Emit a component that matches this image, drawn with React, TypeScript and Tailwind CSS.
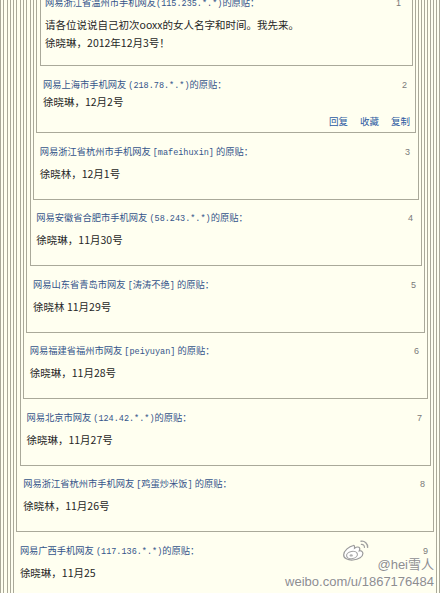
import type { ReactNode } from "react";

interface FloorData {
  author: string;
  lines: string[];
}

const floors: FloorData[] = [
  {
    author: "网易浙江省温州市手机网友(115.235.*.*)的原贴：",
    lines: ["请各位说说自己初次ooxx的女人名字和时间。我先来。", "徐晓琳，2012年12月3号！"],
  },
  { author: "网易上海市手机网友 (218.78.*.*)的原贴：", lines: ["徐晓琳，12月2号"] },
  { author: "网易浙江省杭州市手机网友 [mafeihuxin] 的原贴：", lines: ["徐晓林，12月1号"] },
  { author: "网易安徽省合肥市手机网友 (58.243.*.*)的原贴：", lines: ["徐晓琳，11月30号"] },
  { author: "网易山东省青岛市网友 [涛涛不绝] 的原贴：", lines: ["徐晓林 11月29号"] },
  { author: "网易福建省福州市网友 [peiyuyan] 的原贴：", lines: ["徐晓琳，11月28号"] },
  { author: "网易北京市网友 (124.42.*.*)的原贴：", lines: ["徐晓琳，11月27号"] },
  { author: "网易浙江省杭州市手机网友 [鸡蛋炒米饭] 的原贴：", lines: ["徐晓林，11月26号"] },
  { author: "网易广西手机网友 (117.136.*.*)的原贴：", lines: ["徐晓琳，11月25"] },
];

// latin runs in the author line use the narrow mono face, like SimSun does
function AuthorText({ text }: { text: string }) {
  const parts = text.split(/([\x21-\x7e][\x20-\x7e]*[\x21-\x7e]|[\x21-\x7e])/);
  return (
    <span className="whitespace-nowrap text-[9.25px] text-[#34548a]">
      {parts.map((part, i) =>
        /[\x21-\x7e]/.test(part) ? (
          <span key={i} className="font-['Liberation_Mono',monospace] text-[8.5px]">
            {part}
          </span>
        ) : (
          <span key={i}>{part}</span>
        ),
      )}
    </span>
  );
}

function HeaderRow({ n, className }: { n: number; className: string }) {
  return (
    <div className={className}>
      <AuthorText text={floors[n - 1].author} />
      <span className="font-['Liberation_Sans',sans-serif] text-[9px] text-[#7a7a7a]">{n}</span>
    </div>
  );
}

function FirstFloor() {
  return (
    <div className="border border-[#aaa99a] pt-[5px] pr-[2px] pb-[13px] pl-[4.5px]">
      <HeaderRow n={1} className="flex h-[16px] items-center justify-between pr-[9px] leading-none" />
      <div className="mt-[5px] text-[10.5px] leading-[18px] text-[#262626]">
        {floors[0].lines.map((line) => (
          <p key={line}>{line}</p>
        ))}
      </div>
    </div>
  );
}

function Floor({ n }: { n: number }): ReactNode {
  if (n === 1) return <FirstFloor />;

  if (n === 2) {
    return (
      <div className="border border-[#aaa99a] pt-[3px] pr-[2px] pb-[3px] pl-[2.3px]">
        <Floor n={1} />
        <HeaderRow
          n={2}
          className="mt-[11px] flex h-[16px] items-center justify-between pr-[6px] pl-[3.4px] leading-none"
        />
        <div className="mt-[1px] flex h-[16px] items-center pl-[3.4px] text-[10.5px] leading-none text-[#262626]">
          {floors[1].lines[0]}
        </div>
        <div className="mt-[5px] flex h-[14px] items-center justify-end gap-[12px] pr-[3px] text-[9.5px] leading-none text-[#2c5aa2]">
          <span>回复</span>
          <span>收藏</span>
          <span>复制</span>
        </div>
      </div>
    );
  }

  if (n > floors.length) {
    return (
      <div className="border border-[#aaa99a] pt-[3px] pr-[2px] pb-[60px] pl-[2.3px]">
        <Floor n={n - 1} />
      </div>
    );
  }

  return (
    <div className="border border-[#aaa99a] pt-[3px] pr-[2px] pb-[16.5px] pl-[2.3px]">
      <Floor n={n - 1} />
      <HeaderRow
        n={n}
        className="mt-[11px] flex h-[16px] items-center justify-between pr-[6px] pl-[3.4px] leading-none"
      />
      <div className="mt-[6px] flex h-[16px] items-center pl-[3.4px] text-[10.5px] leading-none text-[#262626]">
        {floors[n - 1].lines[0]}
      </div>
    </div>
  );
}

function WeiboLogo() {
  return (
    <svg width="32" height="24" viewBox="0 0 32 24" fill="none">
      <path
        d="M12.5 7.5c-4.5 1-9.5 5-9.8 9.2-.3 3.6 4.2 5.6 9.2 5.3 5.8-.4 10-3.4 10-6.6 0-2-2-3-3.6-2.6.8-1.6.6-3-.4-3.5-1.2-.6-3 0-4.4 1 .2-1.8-.4-3.2-1-2.8z"
        fill="#fff"
        stroke="#9a9a9a"
        strokeWidth="1.2"
      />
      <ellipse cx="11" cy="17" rx="5.5" ry="3.6" transform="rotate(-12 11 17)" stroke="#a4a4a4" strokeWidth="1.1" />
      <ellipse cx="10.2" cy="17.4" rx="1.6" ry="1.2" fill="#b0b0b0" />
      <path d="M20 3.2c3.6-.6 7 2.4 6.6 6.2" stroke="#a0a0a0" strokeWidth="1.4" strokeLinecap="round" />
      <path d="M20.4 6.4c1.8-.2 3.2 1.2 3 3" stroke="#a0a0a0" strokeWidth="1.2" strokeLinecap="round" />
    </svg>
  );
}

export default function App() {
  return (
    <div className="relative h-[593px] w-[440px] overflow-hidden bg-[#fffff0] font-['Noto_Sans_CJK_SC',sans-serif]">
      <div className="mt-[-59px] w-[449px] bg-[#fffff0]">
        <Floor n={13} />
      </div>

      <div className="absolute top-[538px] right-[6px] flex flex-col items-end font-['Liberation_Sans','Noto_Sans_CJK_SC',sans-serif] text-[13px] leading-[16px] text-[#8e8e8e] [text-shadow:0_0_2px_#fff,0_0_1px_#fff]">
        <div className="flex items-end gap-[4px]">
          <WeiboLogo />
          <span className="mb-[-11px]">@hei雪人</span>
        </div>
        <span className="mt-[12px]">weibo.com/u/1867176484</span>
      </div>
    </div>
  );
}
